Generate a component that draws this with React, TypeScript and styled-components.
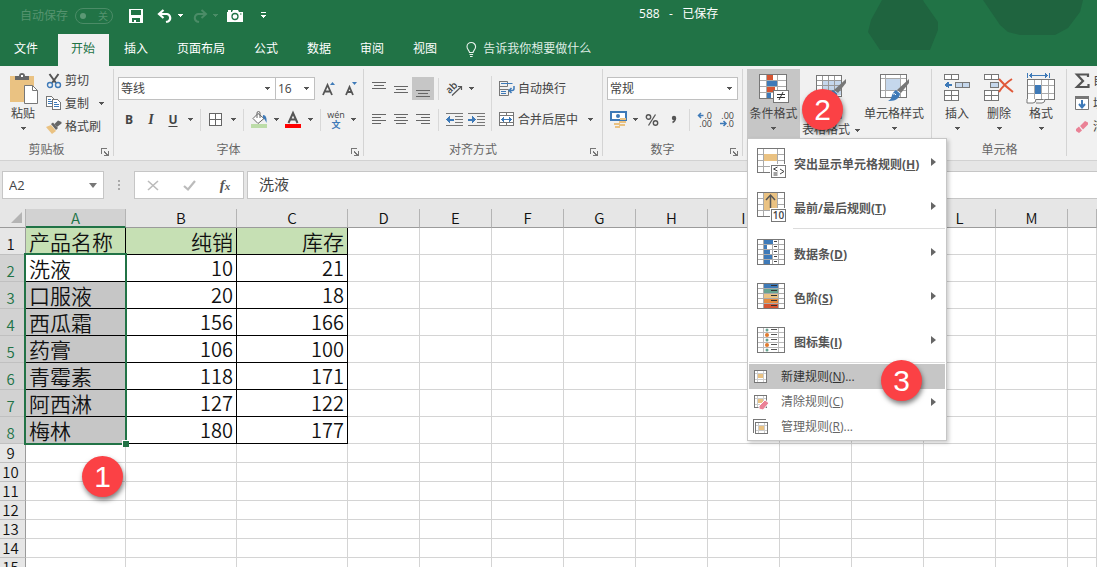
import React from "react";
import styled, { createGlobalStyle, css } from "styled-components";

const GREEN = "#217346";
const UI_FONT = '"Open Sans", "Noto Sans CJK SC", sans-serif';
const SHEET_FONT = '"Noto Sans CJK SC", sans-serif';

const GlobalStyle = createGlobalStyle`
  *, *::before, *::after { box-sizing: border-box; }
  body { margin: 0; background: #fff; }
  button, input, select { font: inherit; color: inherit; }
  button { background: none; border: 0; padding: 0; margin: 0; cursor: default; }
  svg { overflow: visible; }
`;

/* ---------- Frame ---------- */

const Workbook = styled.div`
  display: flex;
  flex-direction: column;
  height: 100vh;
  overflow: hidden;
  font-family: ${UI_FONT};
  font-size: 12px;
  line-height: 16px;
  color: #444;
`;

const TopArea = styled.header`
  position: relative;
  flex: none;
  background: ${GREEN};
  color: #fff;
`;

const Backdrop = styled.svg`
  position: absolute;
  top: 0;
  right: 0;
`;

const TitleBar = styled.div`
  display: flex;
  align-items: center;
  height: 34px;
  padding: 0 20px 3px;
`;

const AutoSave = styled.label`
  display: flex;
  align-items: center;
  gap: 7px;
  color: #55936f;
`;

const Toggle = styled.span`
  position: relative;
  display: flex;
  width: 38px;
  height: 16px;
`;

const ToggleInput = styled.input`
  appearance: none;
  width: 100%;
  height: 100%;
  margin: 0;
  border: 1px solid #4b8c67;
  border-radius: 8px;
  &::before {
    content: "";
    display: block;
    width: 6px;
    height: 6px;
    margin: 4px;
    border-radius: 3px;
    background: #5b9875;
  }
`;

const ToggleText = styled.span`
  position: absolute;
  top: 0;
  right: 5px;
  font-size: 10px;
`;

const QuickTools = styled.div`
  display: flex;
  align-items: center;
  gap: 9px;
  margin-left: 16px;
`;

const QuickPair = styled.div`
  display: flex;
  align-items: center;
  gap: 5px;
`;

const QuickButton = styled.button<{ $dim?: boolean; $after?: number }>`
  display: flex;
  align-items: center;
  height: 22px;
  margin-right: ${(p) => p.$after ?? 0}px;
  color: ${(p) => (p.$dim ? "#4b8c67" : "#fff")};
`;

const DocTitle = styled.h1`
  margin: 0 0 3px;
  padding-left: 373px;
  font-size: 12px;
  font-weight: 400;
  white-space: pre;
`;

const TabStrip = styled.nav`
  display: flex;
  height: 32px;
`;

const Tab = styled.button<{ $active?: boolean }>`
  flex: none;
  height: 32px;
  padding: 0 14px 3px 15px;
  white-space: nowrap;
  ${(p) =>
    p.$active &&
    css`
      padding: 0 14px 3px 13px;
      background: #f1f1f1;
      color: ${GREEN};
    `}
`;

const FileTab = styled(Tab)`
  padding: 0 20px 3px 14px;
`;

const TellMe = styled.button`
  display: flex;
  align-items: center;
  gap: 6px;
  margin-left: 15px;
  padding-bottom: 2px;
  color: #dfece4;
  white-space: nowrap;
`;

/* ---------- Ribbon ---------- */

const RibbonBar = styled.section`
  position: relative;
  z-index: 2;
  display: flex;
  flex: none;
  height: 95px;
  padding-top: 3px;
  background: #f1f1f1;
  border-bottom: 1px solid #d2d2d2;
`;

const GroupBox = styled.div<{ $w?: number }>`
  position: relative;
  display: flex;
  flex-direction: column;
  flex: none;
  width: ${(p) => (p.$w ? `${p.$w}px` : "auto")};
  padding-left: 4px;
  ${(p) =>
    p.$w &&
    css`
      &::after {
        content: "";
        position: absolute;
        top: 0;
        right: 0;
        width: 1px;
        height: 87px;
        background: #d4d4d4;
      }
    `}
`;

const GroupBody = styled.div`
  display: flex;
  flex: none;
  height: 69px;
`;

const GroupFoot = styled.div`
  display: flex;
  align-items: center;
  flex: none;
  height: 22px;
  margin-left: -4px;
  padding-top: 2px;
  color: #666;
`;

const GroupName = styled.span`
  flex: 1;
  text-align: center;
`;

const Launcher = styled.button`
  display: flex;
  align-items: center;
  justify-content: center;
  width: 16px;
  height: 16px;
  margin: 4px 1px 0 4px;
`;

const Rows = styled.div`
  display: flex;
  flex-direction: column;
  gap: 8px;
  padding-top: 8px;
`;

const Line = styled.div<{ $gap?: number }>`
  display: flex;
  align-items: center;
  gap: ${(p) => p.$gap ?? 0}px;
  height: 23px;
`;

const FontPickers = styled.div`
  display: flex;
  margin-right: 3px;
`;

const Tool = styled.button<{ $on?: boolean }>`
  display: flex;
  align-items: center;
  justify-content: center;
  flex: none;
  width: 22px;
  height: 23px;
  background: ${(p) => (p.$on ? "#c6c6c6" : "none")};
`;

const Letter = styled.span<{ $kind: "b" | "i" | "u" }>`
  font-size: 12px;
  font-weight: 700;
  ${(p) =>
    p.$kind === "i" &&
    css`
      font-family: "Liberation Serif", serif;
      font-style: italic;
      font-size: 14px;
    `}
  ${(p) => p.$kind === "u" && "text-decoration: underline; text-underline-offset: 2px;"}
`;

const CaretButton = styled.button`
  display: flex;
  align-items: center;
  justify-content: center;
  flex: none;
  width: 12px;
  height: 23px;
`;

const Sep = styled.span<{ $tall?: boolean }>`
  flex: none;
  width: 1px;
  height: ${(p) => (p.$tall ? 55 : 22)}px;
  margin: ${(p) => (p.$tall ? "7px 4px 0" : "0 4px")};
  background: #d8d8d8;
`;

const ComboBox = styled.span<{ $w: number; $joined?: boolean }>`
  position: relative;
  display: flex;
  flex: none;
  width: ${(p) => p.$w}px;
  height: 23px;
  border: 1px solid #c0c0c0;
  ${(p) => p.$joined && "border-left: 0;"}
  background: #fff;
  & > svg {
    position: absolute;
    right: 5px;
    top: 9px;
    pointer-events: none;
  }
`;

const ComboSelect = styled.select`
  appearance: none;
  width: 100%;
  padding: 0 0 0 2px;
  border: 0;
  background: none;
  outline: 0;
`;

const WideTool = styled.button`
  display: flex;
  align-items: center;
  gap: 3px;
  height: 23px;
  padding-left: 3px;
  white-space: nowrap;
`;

const SmallStack = styled.div`
  display: flex;
  flex-direction: column;
  margin-left: 4px;
`;

const SmallTool = styled.button`
  display: flex;
  align-items: center;
  gap: 3px;
  height: 23px;
  white-space: nowrap;
`;

const SmallRow = styled.div`
  display: flex;
  gap: 6px;
`;

const BigTool = styled.button<{ $w: number; $on?: boolean }>`
  display: flex;
  flex-direction: column;
  align-items: center;
  flex: none;
  width: ${(p) => p.$w}px;
  height: 69px;
  padding-top: 4px;
  white-space: nowrap;
  background: ${(p) => (p.$on ? "#c6c6c6" : "none")};
  & > svg {
    flex: none;
    margin-bottom: 2px;
  }
`;

const BigLabel = styled.span`
  display: flex;
  align-items: center;
  flex: none;
  gap: 5px;
  height: 16px;
`;

const BigCaret = styled.span`
  display: flex;
  margin-top: 5px;
`;

const MenuAnchor = styled.div`
  position: relative;
`;

/* ---------- Conditional formatting menu ---------- */

const Menu = styled.div`
  position: absolute;
  z-index: 3;
  top: 69px;
  left: 0;
  width: 200px;
  padding: 1px 1px;
  border: 1px solid #c6c6c6;
  background: #fff;
  box-shadow: 2px 2px 4px rgba(0, 0, 0, 0.2);
`;

const MenuLarge = styled.button`
  display: flex;
  align-items: center;
  width: 100%;
  height: 44px;
  padding: 0 9px 0 7px;
  color: #555;
  font-weight: 700;
  white-space: nowrap;
`;

const MenuSmall = styled.button<{ $hot?: boolean }>`
  display: flex;
  align-items: center;
  width: 100%;
  height: 25px;
  padding: 0 9px 0 4px;
  color: ${(p) => (p.$hot ? "#333" : "#666")};
  background: ${(p) => (p.$hot ? "#c6c6c6" : "none")};
  white-space: nowrap;
`;

const MenuText = styled.span<{ $large?: boolean }>`
  flex: 1;
  text-align: left;
  padding-left: ${(p) => (p.$large ? 7 : 12)}px;
  padding-top: ${(p) => (p.$large ? 6 : 0)}px;
`;

const MenuRule = styled.div<{ $inset?: boolean }>`
  height: 1px;
  margin: 0 0 1px ${(p) => (p.$inset ? 44 : 0)}px;
  background: #dcdcdc;
`;

const Badge = styled.span<{ $x: number; $y: number }>`
  position: absolute;
  z-index: 4;
  left: ${(p) => p.$x}px;
  top: ${(p) => p.$y}px;
  display: flex;
  align-items: center;
  justify-content: center;
  width: 41px;
  height: 41px;
  border-radius: 50%;
  background: #fb4145;
  box-shadow: 1px 3px 5px rgba(0, 0, 0, 0.5);
  color: #fff;
  font-family: "Liberation Sans", sans-serif;
  font-size: 30px;
  line-height: 30px;
`;

/* ---------- Formula bar ---------- */

const FormulaBar = styled.section`
  display: flex;
  flex: none;
  height: 48px;
  padding: 10px 0 10px 2px;
  background: #e6e6e6;
`;

const NameBox = styled.div`
  display: flex;
  align-items: center;
  width: 102px;
  padding-right: 6px;
  border: 1px solid #c6c6c6;
  background: #fff;
  color: #444;
`;

const NameInput = styled.input`
  flex: 1;
  min-width: 0;
  padding: 0 0 0 6px;
  border: 0;
  outline: 0;
  background: none;
  font-size: 13px;
`;

const Grip = styled.span`
  display: flex;
  align-items: center;
  justify-content: center;
  width: 30px;
`;

const EditButtons = styled.div`
  display: flex;
  align-items: center;
  justify-content: space-around;
  width: 110px;
  margin-right: 3px;
  border: 1px solid #c6c6c6;
  background: #fff;
`;

const EditButton = styled.button`
  display: flex;
  align-items: center;
  justify-content: center;
  width: 36px;
  height: 26px;
`;

const FunctionMark = styled.span`
  font-family: "Liberation Serif", serif;
  font-size: 15px;
  font-style: italic;
  font-weight: 700;
  color: #555;
  & > small {
    font-size: 11px;
  }
`;

const FormulaInput = styled.input`
  flex: 1;
  min-width: 0;
  padding: 0 11px 2px;
  border: 1px solid #c6c6c6;
  border-right: 0;
  outline: 0;
  background: #fff;
  font-family: ${SHEET_FONT};
  font-size: 15px;
`;

/* ---------- Sheet ---------- */

const SheetArea = styled.main`
  position: relative;
  flex: 1;
  min-height: 0;
  overflow: hidden;
`;

const SheetTable = styled.table`
  width: 100%;
  min-width: 1097px;
  table-layout: fixed;
  border-collapse: separate;
  border-spacing: 0;
  font-family: ${SHEET_FONT};
  color: #111;
`;

const Corner = styled.th`
  height: 19px;
  padding: 0;
  background: #e6e6e6;
  border-right: 1px solid #b4b4b4;
  border-bottom: 1px solid #9b9b9b;
  & > svg {
    display: block;
    margin: 0 0 0 11px;
  }
`;

const ColHead = styled.th<{ $sel?: boolean }>`
  height: 19px;
  padding: 0;
  border-right: 1px solid #b4b4b4;
  border-bottom: ${(p) => (p.$sel ? `2px solid ${GREEN}` : "1px solid #9b9b9b")};
  background: ${(p) => (p.$sel ? "#d2d2d2" : "#e6e6e6")};
  color: ${(p) => (p.$sel ? GREEN : "#111")};
  font-size: 15px;
  font-weight: 350;
  line-height: 16px;
`;

const RowHead = styled.th<{ $tall?: boolean; $sel?: boolean }>`
  height: ${(p) => (p.$tall ? 27 : 19)}px;
  padding: 0 4px 0 0;
  vertical-align: bottom;
  border-right: 1px solid #9b9b9b;
  border-bottom: 1px solid #c0c0c0;
  background: ${(p) => (p.$sel ? "#d2d2d2" : "#e6e6e6")};
  color: ${(p) => (p.$sel ? GREEN : "#111")};
  font-size: 15px;
  font-weight: 350;
  line-height: ${(p) => (p.$tall ? 20 : 18)}px;
`;

const Cell = styled.td<{ $data?: boolean; $head?: boolean; $shade?: boolean; $num?: boolean }>`
  padding: 0 3px;
  border-right: 1px solid ${(p) => (p.$data ? "#000" : "#d4d4d4")};
  border-bottom: 1px solid ${(p) => (p.$data ? "#000" : "#d4d4d4")};
  background: ${(p) => (p.$head ? "#c6e0b4" : p.$shade ? "#c6c6c6" : "#fff")};
  font-size: ${(p) => (p.$num ? 20 : 21)}px;
  font-weight: 350;
  line-height: 26px;
  text-align: ${(p) => (p.$num ? "right" : "left")};
  white-space: nowrap;
`;

const HeadNumCell = styled(Cell)`
  text-align: right;
`;

const Selection = styled.div`
  position: absolute;
  top: 44px;
  left: 24px;
  width: 103px;
  height: 192px;
  border: 2px solid ${GREEN};
  pointer-events: none;
  &::after {
    content: "";
    position: absolute;
    right: -4px;
    bottom: -4px;
    width: 7px;
    height: 7px;
    border: solid #fff;
    border-width: 1px 0 0 1px;
    background: ${GREEN};
  }
`;

/* ---------- Drawings ---------- */

type SvgProps = { w: number; h: number; soft?: boolean; children: React.ReactNode };

const Svg = ({ w, h, soft, children }: SvgProps) => (
  <svg
    width={w}
    height={h}
    viewBox={`0 0 ${w} ${h}`}
    fill="none"
    aria-hidden="true"
    shapeRendering={soft ? "auto" : "crispEdges"}
  >
    {children}
  </svg>
);

const Caret = ({ color = "#555" }: { color?: string }) => (
  <Svg w={5} h={3}>
    <path d="M0 0h5v1H0zM1 1h3v1H1zM2 2h1v1H2z" fill={color} />
  </Svg>
);

const Side = () => (
  <Svg w={5} h={8} soft>
    <path d="M0 0l5 4-5 4z" fill="#666" />
  </Svg>
);

type Fill = [number, number, number, number, string];
const Lattice = ({
  xs,
  ys,
  fills = [],
  color = "#777",
  inner = "#aaa",
}: {
  xs: number[];
  ys: number[];
  fills?: Fill[];
  color?: string;
  inner?: string;
}) => {
  const x0 = xs[0];
  const y0 = ys[0];
  const x1 = xs[xs.length - 1];
  const y1 = ys[ys.length - 1];
  return (
    <g>
      <rect x={x0} y={y0} width={x1 - x0 + 1} height={y1 - y0 + 1} fill="#fff" />
      {xs.slice(1, -1).map((x) => (
        <rect key={`x${x}`} x={x} y={y0} width={1} height={y1 - y0} fill={inner} />
      ))}
      {ys.slice(1, -1).map((y) => (
        <rect key={`y${y}`} x={x0} y={y} width={x1 - x0} height={1} fill={inner} />
      ))}
      {fills.map(([x, y, w, h, f], i) => (
        <rect key={i} x={x} y={y} width={w} height={h} fill={f} />
      ))}
      <rect x={x0 + 0.5} y={y0 + 0.5} width={x1 - x0} height={y1 - y0} stroke={color} />
    </g>
  );
};

const BLUE = "#3e7ab8";
const RED = "#d65532";
const GOLD = "#eac282";

const SaveIcon = () => (
  <Svg w={14} h={14}>
    <path d="M0 0h14v14H0zM2 1v5h10V1zM3 9v4h2v-2h2v2h4V9z" fill="#fff" fillRule="evenodd" />
  </Svg>
);

const UndoIcon = () => (
  <Svg w={16} h={14} soft>
    <path d="M6.500 1L2 5l4.500 4M2.500 5H10a4 4 0 0 1 1 7.500l-2 .5" stroke="currentColor" strokeWidth="2.200" />
  </Svg>
);

const RedoIcon = () => (
  <Svg w={16} h={14} soft>
    <path d="M9.500 1L14 5l-4.500 4M13.500 5H6a4 4 0 0 0-1 7.500l2 .5" stroke="currentColor" strokeWidth="2" />
  </Svg>
);

const CameraIcon = () => (
  <Svg w={16} h={14} soft>
    <path d="M0 3h1V1h3v2h1l1-2h5l1 2h4v10H0z" fill="#fff" />
    <circle cx="8" cy="7.500" r="3" stroke={GREEN} strokeWidth="1.300" />
    <path d="M13 5h1.500" stroke={GREEN} />
  </Svg>
);

const CustomizeIcon = () => (
  <Svg w={5} h={7}>
    <path d="M0 0h5v1H0zM0 3h5v1H4v1H3v1H2V5H1V4H0z" fill="#fff" />
  </Svg>
);

const BulbIcon = () => (
  <Svg w={11} h={15} soft>
    <path
      d="M3.500 10.500C3.500 8.500 1 7.500 1 4.800a4.300 4.300 0 0 1 8.600 0c0 2.700-2.500 3.700-2.500 5.700zM3.500 12.500h3.600M4 14.500h2.600"
      stroke="#e8f2ec"
      strokeWidth="1.100"
    />
  </Svg>
);

const PasteIcon = () => (
  <Svg w={30} h={31} soft>
    <rect x="2" y="3" width="24" height="26" fill={GOLD} />
    <path d="M7 3h4a3 3 0 0 1 6 0h4v4H7z" fill="#666" />
    <rect x="13" y="2" width="2" height="2" fill="#fff" />
    <path d="M16.500 12.500h8l5 5v13h-13z" fill="#fff" stroke="#777" />
    <path d="M24.500 12.500v5h5" stroke="#777" />
  </Svg>
);

const CutIcon = () => (
  <Svg w={16} h={16} soft>
    <path d="M3.500 1l6.500 9M12.500 1L6 10" stroke="#555" strokeWidth="2" />
    <circle cx="4" cy="12" r="2.500" stroke={BLUE} strokeWidth="1.400" />
    <circle cx="12" cy="12" r="2.500" stroke={BLUE} strokeWidth="1.400" />
  </Svg>
);

const CopyIcon = () => (
  <Svg w={16} h={15}>
    <path d="M.5.5h5l3 3v7h-8z" fill="#fff" stroke="#777" />
    <path d="M2 3h3v1H2zM2 5h4v1H2zM2 7h4v1H2z" fill={BLUE} />
    <path d="M6.500 3.500h5l3 3v7h-8z" fill="#fff" stroke="#777" />
    <path d="M8 6h3v1H8zM8 8h5v1H8zM8 10h5v1H8z" fill={BLUE} />
  </Svg>
);

const PainterIcon = () => (
  <Svg w={16} h={14} soft>
    <path d="M0 7l5-2 5 6-4 3z" fill={GOLD} />
    <path d="M5 4l2-1.500L12 8l-2 2z" fill="#666" />
    <path d="M8.500 4L12 .5l3.500 1.500v1.500L11 7z" fill="#666" />
  </Svg>
);

const LaunchIcon = () => (
  <Svg w={8} h={8}>
    <path d="M0 0h6v1H1v5H0zM3 3h1v1h1v1h1v1h1V3h1v5H3V7h2V6H4V5H3z" fill="#777" />
  </Svg>
);

const FontSizeIcon = ({ up }: { up?: boolean }) => (
  <Svg w={14} h={16} soft>
    <path
      d={up ? "M1 14L5.500 4 10 14M2.500 10.500h6" : "M2 14l3.500-8L9 14M3.500 11h4.500"}
      stroke="#555"
      strokeWidth="1.800"
    />
    <path d={up ? "M8 4l2.500-3L13 4z" : "M8 1h5l-2.500 3z"} fill={BLUE} />
  </Svg>
);

const BorderIcon = () => (
  <Svg w={14} h={14}>
    <path d="M.5.5h12v12H.5zM6.500.5v12M.5 6.500h12" stroke="#666" fill="#fff" />
  </Svg>
);

const FillIcon = () => (
  <Svg w={17} h={17} soft>
    <rect x="0" y="13" width="16" height="4" fill="#bcdca8" />
    <path d="M7 2.500l6 5L7 12.500l-5-5z" fill="#fff" stroke="#666" />
    <path d="M6 7V2q0-1.500 1.500-1.500T9 2v5" stroke="#666" />
    <path d="M12 4c3 0 4 3 3.500 8-1-2-1.500-4-3.500-5z" fill={BLUE} />
  </Svg>
);

const FontColorIcon = () => (
  <Svg w={16} h={16} soft>
    <path d="M3.500 11L8 1l4.500 10M5 7.500h6" stroke="#555" strokeWidth="2" />
    <rect x="0" y="12" width="16" height="4" fill="#f00" />
  </Svg>
);

const PhoneticIcon = () => (
  <Svg w={18} h={18} soft>
    <text x="9" y="7" fontSize="9" textAnchor="middle" fill="#444" fontFamily="Open Sans, sans-serif">
      wén
    </text>
    <text
      x="9"
      y="17"
      fontSize="9"
      fontWeight="700"
      textAnchor="middle"
      fill={BLUE}
      fontFamily="Noto Sans CJK SC, sans-serif"
    >
      文
    </text>
  </Svg>
);

const LinesIcon = ({ rows }: { rows: [number, number, number][] }) => (
  <Svg w={14} h={16}>
    {rows.map(([x, y, w]) => (
      <rect key={y} x={x} y={y} width={w} height={1} fill="#666" />
    ))}
  </Svg>
);

const OrientIcon = () => (
  <Svg w={17} h={16} soft>
    <text
      x="1"
      y="11"
      fontSize="10"
      fill="#444"
      transform="rotate(-45 5 9)"
      fontWeight="600"
      fontFamily="Open Sans, sans-serif"
    >
      ab
    </text>
    <path d="M6 14.500L15.500 5.500M12 5.500h3.500V9" stroke="#555" strokeWidth="1.200" />
  </Svg>
);

const IndentIcon = ({ right }: { right?: boolean }) => (
  <Svg w={17} h={14}>
    <path d="M0 0h17v1H0zM9 3h8v1H9zM9 6h8v1H9zM9 9h8v1H9zM0 12h17v1H0z" fill="#777" />
    <path
      d={
        right
          ? "M0 6h4V3h1v1h1v1h1v1h1v1H7v1H6v1H5v1H4V8H0z"
          : "M8 6H4V3H3v1H2v1H1v1H0v1h1v1h1v1h1v1h1V8h4z"
      }
      fill={BLUE}
    />
  </Svg>
);

const WrapIcon = () => (
  <Svg w={16} h={15} soft>
    <path d="M.5 0v15M.5.5h8M.5 5.500h8v-5M.5 8.500h9M.5 14.500h9v-6" stroke="#777" />
    <path d="M2 2.500h11.500M2 10.500h5M2 12.500h5" stroke={BLUE} />
    <path d="M15 5v2.500q0 2-2 2h-3M12.500 7L10 9.500l2.500 2.500" stroke={BLUE} strokeWidth="1.500" />
  </Svg>
);

const MergeIcon = () => (
  <Svg w={16} h={15}>
    <path d="M.5.5h14v13H.5zM.5 3.500h14M.5 10.500h14M7.500.5v3M7.500 10.500v3" fill="#fff" stroke="#777" />
    <path d="M2 7h11v1H2zM4 5h1v5H4zM3 6h1v3H3zM10 5h1v5h-1zM11 6h1v3h-1z" fill={BLUE} />
  </Svg>
);

const CurrencyIcon = () => (
  <Svg w={17} h={17} soft>
    <rect x="1" y="1" width="15" height="8" fill="#fff" stroke={BLUE} strokeWidth="2" />
    <circle cx="8" cy="5" r="2" fill={BLUE} />
    <path d="M10 7h6v2h-6zM9 10h7v2H9zM9 13h6v2H9zM4 12h6v2H4zM5 15h5v2H5z" fill={GOLD} />
  </Svg>
);

const PercentIcon = () => (
  <Svg w={14} h={14} soft>
    <circle cx="3.500" cy="4" r="2.200" stroke="#555" strokeWidth="1.400" />
    <circle cx="10.500" cy="10" r="2.200" stroke="#555" strokeWidth="1.400" />
    <path d="M10.500 1.500l-7 11" stroke="#555" strokeWidth="1.300" />
  </Svg>
);

const CommaIcon = () => (
  <Svg w={6} h={10} soft>
    <circle cx="3" cy="3" r="2.200" fill="#555" />
    <path d="M4.500 3q0 3-3 4.500" stroke="#555" strokeWidth="1.400" />
  </Svg>
);

const DecimalIcon = ({ less }: { less?: boolean }) => (
  <Svg w={16} h={16} soft>
    <text x="15" y="7" fontSize="9" textAnchor="end" fill="#444" fontFamily="Open Sans, sans-serif">
      {less ? ".00" : ".0"}
    </text>
    <text x="15" y="15" fontSize="9" textAnchor="end" fill="#444" fontFamily="Open Sans, sans-serif">
      {less ? ".0" : ".00"}
    </text>
    <path
      d={less ? "M1 11.500h6M4.500 9L7 11.500 4.500 14" : "M1.500 3.500h5M4 1L1.500 3.500 4 6"}
      stroke={BLUE}
      strokeWidth="1.500"
    />
  </Svg>
);

const CondIcon = () => (
  <Svg w={30} h={31}>
    <Lattice
      xs={[0, 7, 18, 27]}
      ys={[1, 7, 13, 19, 25]}
      color="#777"
      fills={[
        [8, 2, 6, 5, RED],
        [8, 8, 10, 5, BLUE],
        [8, 14, 8, 5, RED],
        [8, 20, 4, 5, BLUE],
      ]}
    />
    <rect x="14.500" y="17.500" width="15" height="12" fill="#fff" stroke="#777" />
    <path d="M18 21.500h8M18 24.500h8" stroke="#333" />
    <path d="M24 19l-4 8" stroke="#333" shapeRendering="auto" />
  </Svg>
);

const Brush = () => (
  <g shapeRendering="auto">
    <path d="M30 6v4l-8 10-4-3z" fill="#777" />
    <path d="M17 17l4 3.500c0 4-4 8-12 7.500 4-2 3-4 4.500-7 .8-1.800 2-3 3.500-4z" fill={BLUE} />
    <path d="M14 21q2-1 3 1" stroke="#fff" />
  </g>
);

const TableStyleIcon = () => (
  <Svg w={30} h={31}>
    <Lattice xs={[0, 6, 12, 18, 25]} ys={[2, 7, 12, 17, 23]} fills={[[7, 8, 18, 14, "#c5d7ec"]]} inner="#999" />
    <path d="M12.500 8v15M18.500 8v15M6 12.500h19M6 17.500h19" stroke="#999" />
    <Brush />
  </Svg>
);

const CellStyleIcon = () => (
  <Svg w={30} h={31}>
    <Lattice xs={[1, 6, 21, 27]} ys={[1, 5, 17, 24]} fills={[[7, 6, 14, 11, "#c5d7ec"]]} />
    <Brush />
  </Svg>
);

const InsertIcon = () => (
  <Svg w={28} h={31}>
    <Lattice xs={[1, 8, 15]} ys={[1, 6]} inner="#777" />
    <Lattice
      xs={[12, 19, 26]}
      ys={[9, 14]}
      inner="#777"
      fills={[
        [13, 10, 6, 4, "#c5d7ec"],
        [20, 10, 6, 4, "#c5d7ec"],
      ]}
    />
    <Lattice xs={[1, 8, 15]} ys={[17, 22, 27]} inner="#777" />
    <path d="M2 11h7v2H2zM3 10h1v4H3zM4 9h2v6H5v-1H4z" fill={BLUE} />
  </Svg>
);

const DeleteIcon = () => (
  <Svg w={30} h={31}>
    <Lattice xs={[0, 7, 14]} ys={[1, 6]} inner="#777" />
    <Lattice xs={[6, 14]} ys={[9, 14]} fills={[[7, 10, 7, 4, "#c5d7ec"]]} />
    <Lattice xs={[0, 7, 14]} ys={[17, 22, 27]} inner="#777" />
    <path d="M15 6q6 7 14 13M28 6q-8 5-13 13" stroke="#e0593a" strokeWidth="2" shapeRendering="auto" />
  </Svg>
);

const FormatIcon = () => (
  <Svg w={30} h={31}>
    <path
      d="M1 0h1v5H1zM23 0h1v5h-1zM3 2h19v1H3zM4 1h1v3H4zM5 0h1v5H5zM19 0h1v5h-1zM20 1h1v3h-1z"
      fill={BLUE}
    />
    <Lattice xs={[1, 8, 15, 22, 28]} ys={[6, 12, 20, 26]} fills={[[9, 12, 6, 9, BLUE]]} />
    <path d="M1 26v4h6q3 0 3-4M10 30h6q3 0 3-4" stroke="#777" fill="#fff" shapeRendering="auto" />
  </Svg>
);

const SumIcon = () => (
  <Svg w={15} h={16} soft>
    <path d="M13 4V1.500H2L8 8l-6 6h11.500v-3" stroke="#555" strokeWidth="2.200" />
  </Svg>
);

const FillDownIcon = () => (
  <Svg w={15} h={15} soft>
    <path d="M.5.5h13v13H.5z" fill="#fff" stroke="#777" />
    <path d="M0 0h14v3H0z" fill="#777" />
    <path d="M7 4v7M4 8l3 3.500L10 8" stroke={BLUE} strokeWidth="2" />
  </Svg>
);

const EraserIcon = () => (
  <Svg w={15} h={14} soft>
    <path d="M1 9l3-2.500 3 4L4 13 1 11zM5 6l5-5 3 1.500v2L8 9.500z" fill="#ea8296" />
  </Svg>
);

const HighlightIcon = () => (
  <Svg w={31} h={31}>
    <Lattice xs={[1, 7, 21, 28]} ys={[1, 7, 13, 19, 25]} fills={[[8, 7, 13, 7, GOLD]]} />
    <rect x="14" y="17" width="17" height="14" fill="#fff" />
    <rect x="15.500" y="18.500" width="14" height="12" fill="#fff" stroke="#777" />
    <path
      d="M21.500 20l-4 2 4 2M17.500 26h4M17.500 28h4M24 22l4 2.500-4 2.500"
      stroke="#444"
      shapeRendering="auto"
    />
  </Svg>
);

const TopRulesIcon = () => (
  <Svg w={31} h={31}>
    <Lattice xs={[1, 7, 21, 28]} ys={[1, 7, 13, 19, 25]} fills={[[8, 2, 13, 17, GOLD]]} />
    <path d="M14.500 17V5M10 9l4.500-5L19 9" stroke="#555" strokeWidth="1.500" shapeRendering="auto" />
    <rect x="14" y="17" width="17" height="14" fill="#fff" />
    <rect x="15.500" y="18.500" width="14" height="12" fill="#fff" stroke="#777" />
    <text
      x="22.500"
      y="28"
      fontSize="10"
      textAnchor="middle"
      fill="#444"
      fontWeight="600"
      fontFamily="Open Sans, sans-serif"
    >
      10
    </text>
  </Svg>
);

const ROWS5 = [2, 7, 12, 17, 22, 27];

const DataBarIcon = () => (
  <Svg w={31} h={31}>
    <Lattice
      xs={[1, 7, 16, 22, 28]}
      ys={ROWS5}
      fills={[9, 3, 6, 8, 6].map((w, i): Fill => [8, 3 + i * 5, w, 4, BLUE])}
    />
    {ROWS5.slice(0, 5).map((y) => (
      <rect key={y} x={18} y={y + 2} width={3} height={1} fill="#444" />
    ))}
  </Svg>
);

const ColorScaleIcon = () => (
  <Svg w={31} h={31}>
    <Lattice
      xs={[1, 7, 22, 28]}
      ys={ROWS5}
      fills={[BLUE, "#67a490", GOLD, "#e58a3c", RED].map((c, i): Fill => [8, 3 + i * 5, 14, 4, c])}
    />
    {ROWS5.slice(0, 5).map((y) => (
      <rect key={y} x={15} y={y + 2} width={6} height={1} fill="#333" />
    ))}
  </Svg>
);

const IconSetIcon = () => (
  <Svg w={31} h={31}>
    <Lattice xs={[1, 7, 22, 28]} ys={ROWS5} inner="#bbb" />
    {ROWS5.slice(0, 5).map((y, i) => (
      <g key={y}>
        <circle
          cx={11}
          cy={y + 3}
          r={i % 2 === 0 ? 1.5 : 2}
          fill={i % 2 === 0 ? "#67a490" : "#e07b2e"}
          shapeRendering="auto"
        />
        <rect x={15} y={y + 2} width={6} height={1} fill="#555" />
      </g>
    ))}
  </Svg>
);

const RuleIcon = ({ kind }: { kind: "new" | "clear" | "manage" }) => (
  <Svg w={16} h={16}>
    {kind === "manage" && <path d="M.5 14V.5H13" stroke="#777" />}
    <Lattice
      xs={kind === "manage" ? [2, 5, 11, 14] : [1, 4, 10, 13]}
      ys={kind === "manage" ? [3, 6, 11, 14] : [1, 4, 10, 13]}
      inner="#ccc"
      fills={[kind === "manage" ? [6, 7, 5, 4, GOLD] : [5, 5, 5, 4, GOLD]]}
    />
    {kind === "clear" && (
      <path d="M6 12l6-6 4 3-6 7-4-1z" fill="#ea8296" stroke="#fff" shapeRendering="auto" />
    )}
  </Svg>
);

/* ---------- Parts ---------- */

const Drop = ({ label }: { label: string }) => (
  <CaretButton aria-label={label}>
    <Caret />
  </CaretButton>
);

const Combo = ({ w, value, label, joined }: { w: number; value: string; label: string; joined?: boolean }) => (
  <ComboBox $w={w} $joined={joined}>
    <ComboSelect aria-label={label} defaultValue={value}>
      <option>{value}</option>
    </ComboSelect>
    <Caret />
  </ComboBox>
);

const Group = ({
  w,
  name,
  launcher,
  children,
}: {
  w?: number;
  name?: string;
  launcher?: boolean;
  children: React.ReactNode;
}) => (
  <GroupBox $w={w}>
    <GroupBody>{children}</GroupBody>
    <GroupFoot>
      <GroupName>{name}</GroupName>
      {launcher && (
        <Launcher aria-label={`${name}设置`}>
          <LaunchIcon />
        </Launcher>
      )}
    </GroupFoot>
  </GroupBox>
);

const Big = ({ w, icon, label, on }: { w: number; icon: React.ReactNode; label: string; on?: boolean }) => (
  <BigTool $w={w} $on={on}>
    {icon}
    <BigLabel>{label}</BigLabel>
    <BigCaret>
      <Caret />
    </BigCaret>
  </BigTool>
);

const largeItems = [
  { icon: <HighlightIcon />, text: "突出显示单元格规则", keyName: "H" },
  { icon: <TopRulesIcon />, text: "最前/最后规则", keyName: "T", rule: true },
  { icon: <DataBarIcon />, text: "数据条", keyName: "D" },
  { icon: <ColorScaleIcon />, text: "色阶", keyName: "S" },
  { icon: <IconSetIcon />, text: "图标集", keyName: "I" },
];

const FormatMenu = () => (
  <Menu>
    {largeItems.map((item) => (
      <React.Fragment key={item.keyName}>
        <MenuLarge>
          {item.icon}
          <MenuText $large>
            {item.text}(<u>{item.keyName}</u>)
          </MenuText>
          <Side />
        </MenuLarge>
        {item.rule && <MenuRule $inset />}
      </React.Fragment>
    ))}
    <MenuRule />
    <MenuSmall $hot>
      <RuleIcon kind="new" />
      <MenuText>
        新建规则(<u>N</u>)...
      </MenuText>
    </MenuSmall>
    <MenuSmall>
      <RuleIcon kind="clear" />
      <MenuText>
        清除规则(<u>C</u>)
      </MenuText>
      <Side />
    </MenuSmall>
    <MenuSmall>
      <RuleIcon kind="manage" />
      <MenuText>
        管理规则(<u>R</u>)...
      </MenuText>
    </MenuSmall>
    <Badge $x={133} $y={221}>
      3
    </Badge>
  </Menu>
);

const alignTop: [number, number, number][] = [[0, 1, 14], [2, 4, 10], [0, 7, 14]];
const alignMid: [number, number, number][] = [[0, 5, 14], [2, 8, 10], [0, 11, 14]];
const alignBottom: [number, number, number][] = [[0, 9, 14], [2, 12, 10], [0, 15, 14]];
const alignLeft: [number, number, number][] = [[0, 2, 14], [0, 5, 9], [0, 8, 14], [0, 11, 9]];
const alignCenter: [number, number, number][] = [[0, 2, 14], [2, 5, 10], [0, 8, 14], [2, 11, 10]];
const alignRight: [number, number, number][] = [[0, 2, 14], [5, 5, 9], [0, 8, 14], [5, 11, 9]];

const Ribbon = () => (
  <RibbonBar>
    <Group w={114} name="剪贴板" launcher>
      <Big w={38} icon={<PasteIcon />} label="粘贴" />
      <SmallStack>
        <SmallTool>
          <CutIcon />
          剪切
        </SmallTool>
        <SmallRow>
          <SmallTool>
            <CopyIcon />
            复制
          </SmallTool>
          <Drop label="复制选项" />
        </SmallRow>
        <SmallTool>
          <PainterIcon />
          格式刷
        </SmallTool>
      </SmallStack>
    </Group>

    <Group w={250} name="字体" launcher>
      <Rows>
        <Line>
          <FontPickers>
            <Combo w={158} value="等线" label="字体" />
            <Combo w={39} value="16" label="字号" joined />
          </FontPickers>
          <Tool aria-label="增大字号">
            <FontSizeIcon up />
          </Tool>
          <Tool aria-label="减小字号">
            <FontSizeIcon />
          </Tool>
        </Line>
        <Line>
          <Tool>
            <Letter $kind="b">B</Letter>
          </Tool>
          <Tool>
            <Letter $kind="i">I</Letter>
          </Tool>
          <Tool>
            <Letter $kind="u">U</Letter>
          </Tool>
          <Drop label="下划线选项" />
          <Sep />
          <Tool aria-label="边框">
            <BorderIcon />
          </Tool>
          <Drop label="边框选项" />
          <Sep />
          <Tool aria-label="填充颜色">
            <FillIcon />
          </Tool>
          <Drop label="填充颜色选项" />
          <Tool aria-label="字体颜色">
            <FontColorIcon />
          </Tool>
          <Drop label="字体颜色选项" />
          <Sep />
          <Tool aria-label="拼音">
            <PhoneticIcon />
          </Tool>
          <Drop label="拼音选项" />
        </Line>
      </Rows>
    </Group>

    <Group w={239} name="对齐方式" launcher>
      <Rows>
        <Line>
          <Tool aria-label="顶端对齐">
            <LinesIcon rows={alignTop} />
          </Tool>
          <Tool aria-label="垂直居中">
            <LinesIcon rows={alignMid} />
          </Tool>
          <Tool $on aria-label="底端对齐">
            <LinesIcon rows={alignBottom} />
          </Tool>
          <Sep />
          <Tool aria-label="方向">
            <OrientIcon />
          </Tool>
          <Drop label="方向选项" />
        </Line>
        <Line>
          <Tool aria-label="左对齐">
            <LinesIcon rows={alignLeft} />
          </Tool>
          <Tool aria-label="居中">
            <LinesIcon rows={alignCenter} />
          </Tool>
          <Tool aria-label="右对齐">
            <LinesIcon rows={alignRight} />
          </Tool>
          <Sep />
          <Tool aria-label="减少缩进量">
            <IndentIcon />
          </Tool>
          <Tool aria-label="增加缩进量">
            <IndentIcon right />
          </Tool>
        </Line>
      </Rows>
      <Sep $tall />
      <Rows>
        <Line>
          <WideTool>
            <WrapIcon />
            自动换行
          </WideTool>
        </Line>
        <Line $gap={6}>
          <WideTool>
            <MergeIcon />
            合并后居中
          </WideTool>
          <Drop label="合并选项" />
        </Line>
      </Rows>
    </Group>

    <Group w={140} name="数字" launcher>
      <Rows>
        <Line>
          <Combo w={131} value="常规" label="数字格式" />
        </Line>
        <Line>
          <Tool aria-label="会计数字格式">
            <CurrencyIcon />
          </Tool>
          <Drop label="会计格式选项" />
          <Tool aria-label="百分比样式">
            <PercentIcon />
          </Tool>
          <Tool aria-label="千位分隔样式">
            <CommaIcon />
          </Tool>
          <Sep />
          <Tool aria-label="增加小数位数">
            <DecimalIcon />
          </Tool>
          <Tool aria-label="减少小数位数">
            <DecimalIcon less />
          </Tool>
        </Line>
      </Rows>
    </Group>

    <Group w={189}>
      <MenuAnchor>
        <Big w={53} on icon={<CondIcon />} label="条件格式" />
        <FormatMenu />
        <Badge $x={55} $y={20}>
          2
        </Badge>
      </MenuAnchor>
      <BigTool $w={62}>
        <TableStyleIcon />
        <BigLabel>套用</BigLabel>
        <BigLabel>
          表格格式
          <Caret />
        </BigLabel>
      </BigTool>
      <Big w={64} icon={<CellStyleIcon />} label="单元格样式" />
    </Group>

    <Group w={135} name="单元格">
      <Big w={42} icon={<InsertIcon />} label="插入" />
      <Big w={42} icon={<DeleteIcon />} label="删除" />
      <Big w={42} icon={<FormatIcon />} label="格式" />
    </Group>

    <Group>
      <SmallStack>
        <SmallTool>
          <SumIcon />
          自动求和
        </SmallTool>
        <SmallTool>
          <FillDownIcon />
          填充
        </SmallTool>
        <SmallTool>
          <EraserIcon />
          清除
        </SmallTool>
      </SmallStack>
    </Group>
  </RibbonBar>
);

/* ---------- Data ---------- */

const letters = ["A", "B", "C", "D", "E", "F", "G", "H", "I", "J", "K", "L", "M"];

const records: [string, string, string][] = [
  ["产品名称", "纯销", "库存"],
  ["洗液", "10", "21"],
  ["口服液", "20", "18"],
  ["西瓜霜", "156", "166"],
  ["药膏", "106", "100"],
  ["青霉素", "118", "171"],
  ["阿西淋", "127", "122"],
  ["梅林", "180", "177"],
];

const emptyRows = [9, 10, 11, 12, 13, 14, 15];

const Blank = ({ n }: { n: number }) => (
  <>
    {Array.from({ length: n }, (_, i) => (
      <Cell key={i} />
    ))}
  </>
);

const widthOf = (letter: string) => (letter === "A" ? 100 : letter === "B" || letter === "C" ? 111 : 72);

const Sheet = () => (
  <SheetArea>
    <SheetTable>
      <colgroup>
        <col width={26} />
        {letters.map((l) => (
          <col key={l} width={widthOf(l)} />
        ))}
        <col />
      </colgroup>
      <thead>
        <tr>
          <Corner aria-label="全选">
            <Svg w={12} h={12} soft>
              <path d="M11 0v11H0z" fill="#b4b4b4" />
            </Svg>
          </Corner>
          {letters.map((l) => (
            <ColHead key={l} $sel={l === "A"}>
              {l}
            </ColHead>
          ))}
          <ColHead />
        </tr>
      </thead>
      <tbody>
        {records.map(([name, sold, stock], i) => (
          <tr key={name}>
            <RowHead $tall $sel={i > 0}>
              {i + 1}
            </RowHead>
            <Cell $data $head={i === 0} $shade={i > 1}>
              {name}
            </Cell>
            {i === 0 ? (
              <>
                <HeadNumCell $data $head>
                  {sold}
                </HeadNumCell>
                <HeadNumCell $data $head>
                  {stock}
                </HeadNumCell>
              </>
            ) : (
              <>
                <Cell $data $num>
                  {sold}
                </Cell>
                <Cell $data $num>
                  {stock}
                </Cell>
              </>
            )}
            <Blank n={11} />
          </tr>
        ))}
        {emptyRows.map((n) => (
          <tr key={n}>
            <RowHead>{n}</RowHead>
            <Blank n={14} />
          </tr>
        ))}
      </tbody>
    </SheetTable>
    <Selection />
    <Badge $x={82} $y={247}>
      1
    </Badge>
  </SheetArea>
);

export default function App() {
  return (
    <Workbook>
      <GlobalStyle />
      <TopArea>
        <Backdrop width="240" height="52" viewBox="857 0 240 52" aria-hidden="true">
          <path
            d="M882 0L871 20l-3 12 12 18h50l8-20v-8L924 2l-1-2zM983 0l17 25 8 7 12 3h35l13-7 12-16 3-12z"
            fill="#1f643f"
          />
        </Backdrop>
        <TitleBar>
          <AutoSave>
            自动保存
            <Toggle>
              <ToggleInput type="checkbox" />
              <ToggleText>关</ToggleText>
            </Toggle>
          </AutoSave>
          <QuickTools>
            <QuickButton $after={5} aria-label="保存">
              <SaveIcon />
            </QuickButton>
            <QuickPair>
              <QuickButton aria-label="撤消">
                <UndoIcon />
              </QuickButton>
              <QuickButton aria-label="撤消选项">
                <Caret color="#fff" />
              </QuickButton>
            </QuickPair>
            <QuickPair>
              <QuickButton $dim aria-label="恢复">
                <RedoIcon />
              </QuickButton>
              <QuickButton aria-label="恢复选项">
                <Caret color="#4b8c67" />
              </QuickButton>
            </QuickPair>
            <QuickButton $after={9} aria-label="照相机">
              <CameraIcon />
            </QuickButton>
            <QuickButton aria-label="自定义快速访问工具栏">
              <CustomizeIcon />
            </QuickButton>
          </QuickTools>
          <DocTitle>{"588   -   已保存"}</DocTitle>
        </TitleBar>
        <TabStrip>
          <FileTab>文件</FileTab>
          <Tab $active>开始</Tab>
          <Tab>插入</Tab>
          <Tab>页面布局</Tab>
          <Tab>公式</Tab>
          <Tab>数据</Tab>
          <Tab>审阅</Tab>
          <Tab>视图</Tab>
          <TellMe>
            <BulbIcon />
            告诉我你想要做什么
          </TellMe>
        </TabStrip>
      </TopArea>
      <Ribbon />
      <FormulaBar>
        <NameBox>
          <NameInput aria-label="名称框" defaultValue="A2" />
          <Svg w={8} h={5} soft>
            <path d="M0 0h8L4 5z" fill="#777" />
          </Svg>
        </NameBox>
        <Grip>
          <Svg w={2} h={11}>
            <path d="M0 0h2v2H0zM0 4h2v2H0zM0 8h2v2H0z" fill="#aaa" />
          </Svg>
        </Grip>
        <EditButtons>
          <EditButton aria-label="取消">
            <Svg w={12} h={11} soft>
              <path d="M1 1l10 9M11 1L1 10" stroke="#bbb" strokeWidth="1.600" />
            </Svg>
          </EditButton>
          <EditButton aria-label="输入">
            <Svg w={13} h={11} soft>
              <path d="M1 6l4 3.500L12 1" stroke="#bbb" strokeWidth="2.200" />
            </Svg>
          </EditButton>
          <EditButton aria-label="插入函数">
            <FunctionMark>
              f<small>x</small>
            </FunctionMark>
          </EditButton>
        </EditButtons>
        <FormulaInput aria-label="编辑栏" defaultValue="洗液" />
      </FormulaBar>
      <Sheet />
    </Workbook>
  );
}
